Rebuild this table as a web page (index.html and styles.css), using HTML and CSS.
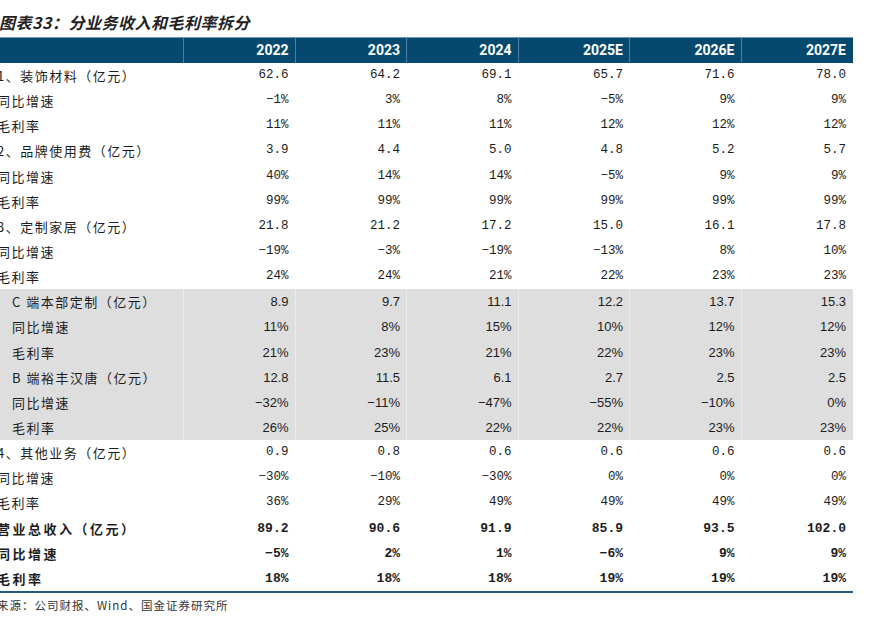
FILE: index.html
```html
<!DOCTYPE html>
<html lang="zh">
<head>
<meta charset="utf-8">
<link rel="stylesheet" href="styles.css">
</head>
<body>
<div class="page">
  <h1 class="title">图表33：分业务收入和毛利率拆分</h1>
  <div class="table">
    <div class="row head">
      <div class="c lab"></div>
      <div class="c">2022</div><div class="c">2023</div><div class="c">2024</div><div class="c">2025E</div><div class="c">2026E</div><div class="c">2027E</div>
    </div>
    <div class="row"><div class="c lab">1、装饰材料（亿元）</div><div class="c">62.6</div><div class="c">64.2</div><div class="c">69.1</div><div class="c">65.7</div><div class="c">71.6</div><div class="c">78.0</div></div>
    <div class="row"><div class="c lab">同比增速</div><div class="c">−1%</div><div class="c">3%</div><div class="c">8%</div><div class="c">−5%</div><div class="c">9%</div><div class="c">9%</div></div>
    <div class="row"><div class="c lab">毛利率</div><div class="c">11%</div><div class="c">11%</div><div class="c">11%</div><div class="c">12%</div><div class="c">12%</div><div class="c">12%</div></div>
    <div class="row"><div class="c lab">2、品牌使用费（亿元）</div><div class="c">3.9</div><div class="c">4.4</div><div class="c">5.0</div><div class="c">4.8</div><div class="c">5.2</div><div class="c">5.7</div></div>
    <div class="row"><div class="c lab">同比增速</div><div class="c">40%</div><div class="c">14%</div><div class="c">14%</div><div class="c">−5%</div><div class="c">9%</div><div class="c">9%</div></div>
    <div class="row"><div class="c lab">毛利率</div><div class="c">99%</div><div class="c">99%</div><div class="c">99%</div><div class="c">99%</div><div class="c">99%</div><div class="c">99%</div></div>
    <div class="row"><div class="c lab">3、定制家居（亿元）</div><div class="c">21.8</div><div class="c">21.2</div><div class="c">17.2</div><div class="c">15.0</div><div class="c">16.1</div><div class="c">17.8</div></div>
    <div class="row"><div class="c lab">同比增速</div><div class="c">−19%</div><div class="c">−3%</div><div class="c">−19%</div><div class="c">−13%</div><div class="c">8%</div><div class="c">10%</div></div>
    <div class="row"><div class="c lab">毛利率</div><div class="c">24%</div><div class="c">24%</div><div class="c">21%</div><div class="c">22%</div><div class="c">23%</div><div class="c">23%</div></div>
    <div class="row sub"><div class="c lab">C 端本部定制（亿元）</div><div class="c">8.9</div><div class="c">9.7</div><div class="c">11.1</div><div class="c">12.2</div><div class="c">13.7</div><div class="c">15.3</div></div>
    <div class="row sub"><div class="c lab">同比增速</div><div class="c">11%</div><div class="c">8%</div><div class="c">15%</div><div class="c">10%</div><div class="c">12%</div><div class="c">12%</div></div>
    <div class="row sub"><div class="c lab">毛利率</div><div class="c">21%</div><div class="c">23%</div><div class="c">21%</div><div class="c">22%</div><div class="c">23%</div><div class="c">23%</div></div>
    <div class="row sub"><div class="c lab">B 端裕丰汉唐（亿元）</div><div class="c">12.8</div><div class="c">11.5</div><div class="c">6.1</div><div class="c">2.7</div><div class="c">2.5</div><div class="c">2.5</div></div>
    <div class="row sub"><div class="c lab">同比增速</div><div class="c">−32%</div><div class="c">−11%</div><div class="c">−47%</div><div class="c">−55%</div><div class="c">−10%</div><div class="c">0%</div></div>
    <div class="row sub"><div class="c lab">毛利率</div><div class="c">26%</div><div class="c">25%</div><div class="c">22%</div><div class="c">22%</div><div class="c">23%</div><div class="c">23%</div></div>
    <div class="row"><div class="c lab">4、其他业务（亿元）</div><div class="c">0.9</div><div class="c">0.8</div><div class="c">0.6</div><div class="c">0.6</div><div class="c">0.6</div><div class="c">0.6</div></div>
    <div class="row"><div class="c lab">同比增速</div><div class="c">−30%</div><div class="c">−10%</div><div class="c">−30%</div><div class="c">0%</div><div class="c">0%</div><div class="c">0%</div></div>
    <div class="row"><div class="c lab">毛利率</div><div class="c">36%</div><div class="c">29%</div><div class="c">49%</div><div class="c">49%</div><div class="c">49%</div><div class="c">49%</div></div>
    <div class="row total"><div class="c lab">营业总收入（亿元）</div><div class="c">89.2</div><div class="c">90.6</div><div class="c">91.9</div><div class="c">85.9</div><div class="c">93.5</div><div class="c">102.0</div></div>
    <div class="row total"><div class="c lab">同比增速</div><div class="c">−5%</div><div class="c">2%</div><div class="c">1%</div><div class="c">−6%</div><div class="c">9%</div><div class="c">9%</div></div>
    <div class="row total last"><div class="c lab">毛利率</div><div class="c">18%</div><div class="c">18%</div><div class="c">18%</div><div class="c">19%</div><div class="c">19%</div><div class="c">19%</div></div>
  </div>
  <p class="source">来源：公司财报、Wind、国金证券研究所</p>
</div>
</body>
</html>
```

FILE: styles.css
```css
html, body {
  margin: 0;
  padding: 0;
  background: #ffffff;
}
.page {
  width: 885px;
  height: 620px;
  overflow: hidden;
  margin-left: -3px;
  color: #1c1c1c;
  font-family: "Noto Sans CJK SC", "Noto Sans", sans-serif;
}
.title {
  margin: 0;
  height: 37px;
  box-sizing: border-box;
  padding-top: 12px;
  padding-left: 2px;
  font-size: 16px;
  line-height: 20px;
  font-weight: 700;
  font-style: italic;
  letter-spacing: 0.5px;
  color: #222;
}
.table {
  width: 856px;
  border-bottom: 2px solid #1e5c84;
}
.row {
  display: grid;
  grid-template-columns: 186px repeat(6, 111.5px);
  height: 25.15px;
  align-items: center;
}
.c {
  text-align: right;
  padding-right: 6px;
  font-family: "Liberation Mono", "Noto Sans CJK SC", monospace;
  font-size: 12.5px;
  line-height: 25px;
  height: 100%;
  white-space: nowrap;
}
.c.lab {
  text-align: left;
  padding-left: 0;
  font-family: "Noto Sans CJK SC", sans-serif;
  font-size: 13px;
  letter-spacing: 1.5px;
}
.row.head {
  height: 26px;
  background: #054a6e;
  border-top: 1px solid #6f98b3;
  box-sizing: border-box;
}
.row.head .c {
  color: #ffffff;
  font-family: "Roboto", "Liberation Sans", sans-serif;
  font-weight: 700;
  font-size: 14px;
  line-height: 25px;
  border-left: 1px solid #4d7e9c;
}
.row.head .c.lab {
  border-left: none;
}
.row.sub {
  background: #dedede;
}
.row.sub .c {
  font-family: "Liberation Sans", "Noto Sans CJK SC", sans-serif;
  font-size: 13px;
  border-left: 1px solid #ececec;
}
.row.sub .c.lab {
  border-left: none;
  padding-left: 15px;
  font-family: "Noto Sans CJK SC", sans-serif;
}
.row.total .c {
  font-weight: 700;
  font-size: 13px;
}
.row.total .c.lab {
  letter-spacing: 2.5px;
}
.source {
  margin: 0;
  padding-top: 4px;
  font-size: 11.5px;
  line-height: 16px;
  letter-spacing: 1px;
  color: #333;
}
```
